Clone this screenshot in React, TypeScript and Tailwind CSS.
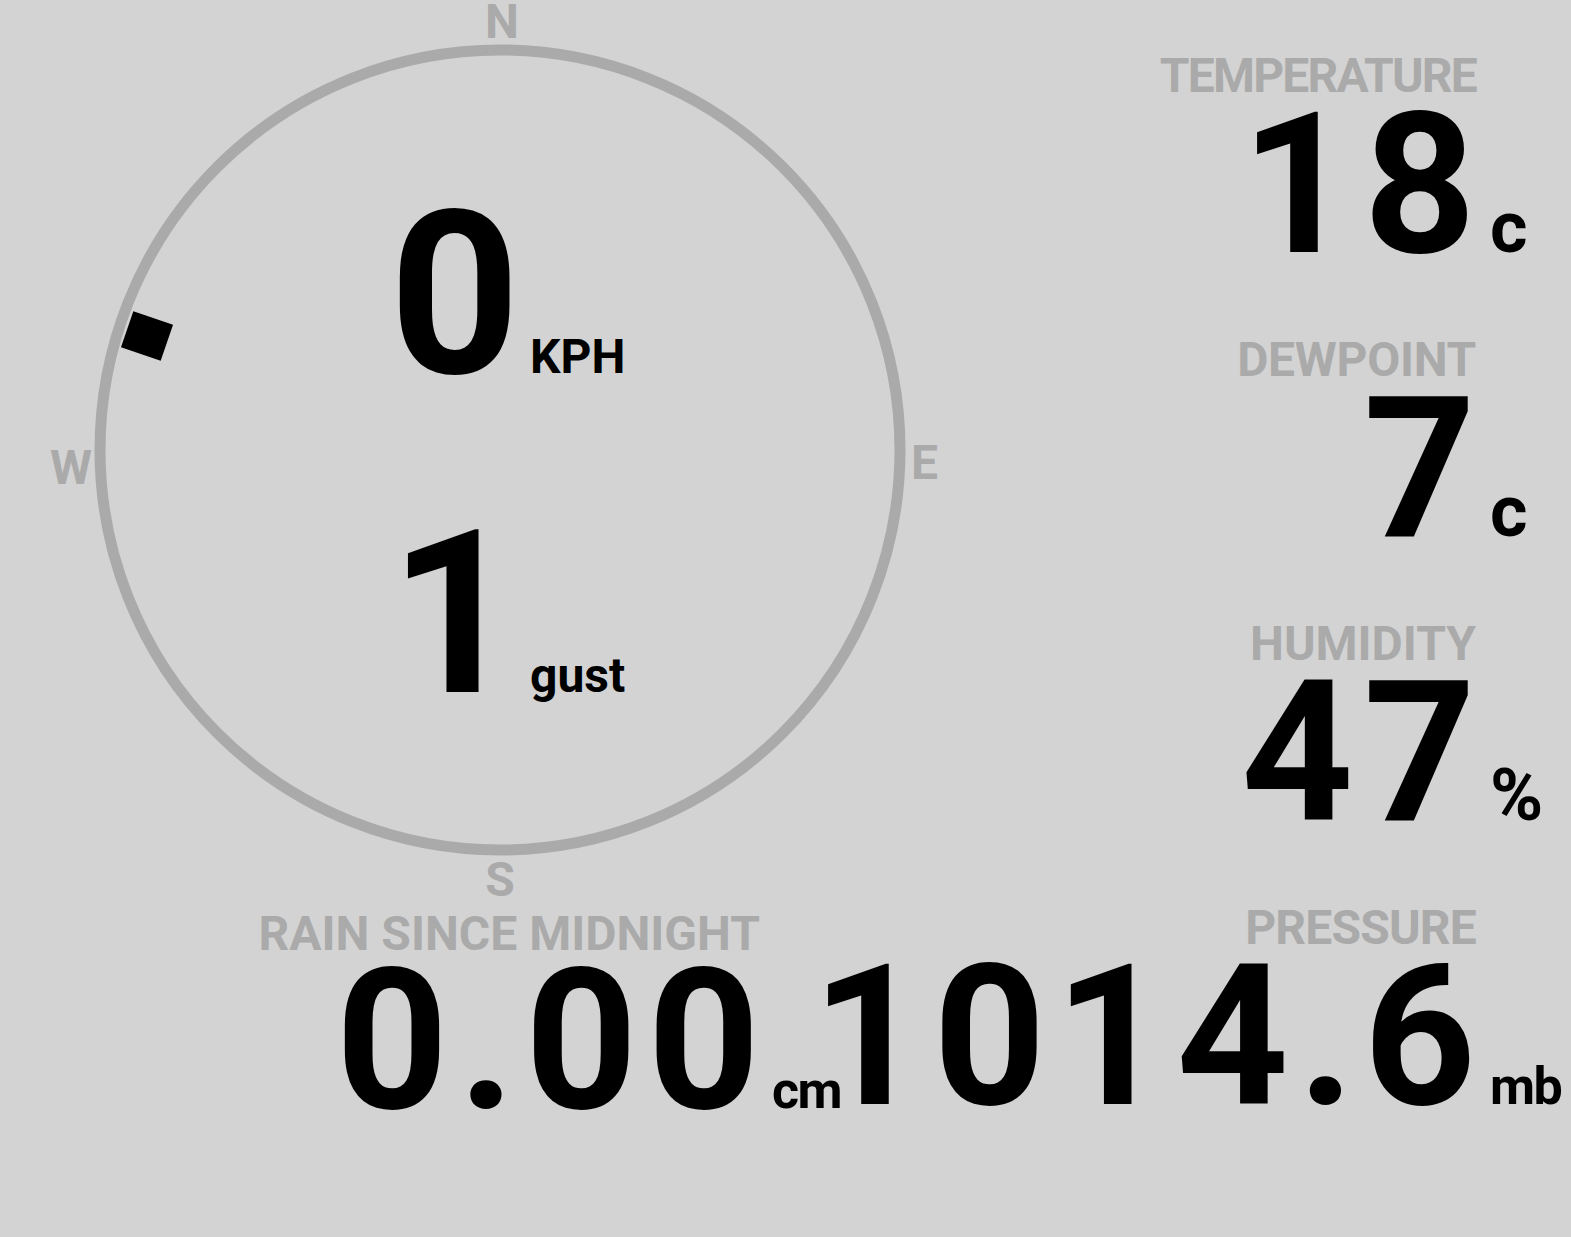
import React from "react";

type Block = { label: string; value: string; unit: string; track: string };

const blocks: Block[] = [
  { label: "TEMPERATURE", value: "18", unit: "c", track: "tracking-[-1.8px]" },
  { label: "DEWPOINT", value: "7", unit: "c", track: "tracking-[-0.3px]" },
  { label: "HUMIDITY", value: "47", unit: "%", track: "tracking-[0px]" },
];

function Spaced({ text, cls }: { text: string; cls: string }) {
  return (
    <>
      <span className={cls}>{text.slice(0, -1)}</span>
      {text.slice(-1)}
    </>
  );
}

export default function App() {
  return (
    <div className="w-[1571px] h-[1237px] bg-[#d3d3d3] flex overflow-hidden font-['Roboto','Liberation_Sans',sans-serif] font-bold text-black">
      {/* Left column: compass + rain */}
      <div className="w-[850px] shrink-0 flex flex-col">
        <div className="relative w-[850px] h-[910px] shrink-0">
          <svg
            className="absolute left-0 top-0"
            width="1000"
            height="910"
            viewBox="0 0 1000 910"
          >
            <circle cx="500" cy="450" r="400" fill="none" stroke="#aaaaaa" strokeWidth="11" />
            <rect x="-21" y="-19" width="42" height="38" fill="#000" transform="translate(147 336) rotate(19)" />
          </svg>
          <div className="absolute left-[502px] top-0 -translate-x-1/2 text-[48px] leading-[44px] text-[#aaaaaa]">N</div>
          <div className="absolute left-[911px] top-[439px] text-[48px] leading-[48px] text-[#aaaaaa]">E</div>
          <div className="absolute left-[50px] top-[444px] text-[48px] leading-[48px] text-[#aaaaaa]">W</div>
          <div className="absolute left-[500px] top-[856px] -translate-x-1/2 text-[48px] leading-[48px] text-[#aaaaaa]">S</div>

          <div className="relative flex flex-col pt-[181px] gap-[91px]">
            <div className="flex items-baseline">
              <div className="w-[520px] text-right text-[228px] leading-[228px]">0</div>
              <div className="ml-[10px] text-[48px] leading-[48px]">KPH</div>
            </div>
            <div className="flex items-baseline">
              <div className="w-[520px] text-right text-[228px] leading-[228px]">1</div>
              <div className="ml-[10px] text-[48px] leading-[48px]">gust</div>
            </div>
          </div>
        </div>

        <div className="self-end grid grid-cols-[auto_90px] items-baseline">
          <div className="col-start-1 row-start-1 justify-self-end text-[48px] leading-[48px] text-[#aaaaaa]">
            RAIN SINCE MIDNIGHT
          </div>
          <div className="col-start-1 row-start-2 text-right text-[196px] leading-[166px]">
            <Spaced text="0.00" cls="tracking-[10px]" />
          </div>
          <div className="col-start-2 row-start-2 pl-[12px] text-[52px] leading-[52px] tracking-[-1.5px]">cm</div>
        </div>
      </div>

      {/* Right column */}
      <div className="flex-1 min-w-0 flex flex-col items-end pt-[52px] gap-[66px]">
        {blocks.map((b) => (
          <div key={b.label} className="shrink-0 grid grid-cols-[auto_95px] items-baseline">
            <div className={`col-start-1 row-start-1 justify-self-end text-[48px] leading-[48px] text-[#aaaaaa] ${b.track}`}>
              {b.label}
            </div>
            <div className="col-start-1 row-start-2 text-right text-[196px] leading-[170px]">
              <Spaced text={b.value} cls="tracking-[10px]" />
            </div>
            <div className="col-start-2 row-start-2 pl-[14px] text-[72px] leading-[72px]">{b.unit}</div>
          </div>
        ))}
        <div className="shrink-0 grid grid-cols-[auto_95px] items-baseline">
          <div className="col-start-1 row-start-1 justify-self-end text-[48px] leading-[48px] text-[#aaaaaa] tracking-[-0.8px]">
            PRESSURE
          </div>
          <div className="col-start-1 row-start-2 text-right text-[196px] leading-[170px] whitespace-nowrap">
            <Spaced text="1014.6" cls="tracking-[9px]" />
          </div>
          <div className="col-start-2 row-start-2 pl-[14px] text-[52px] leading-[52px] tracking-[-1.5px]">mb</div>
        </div>
      </div>
    </div>
  );
}
